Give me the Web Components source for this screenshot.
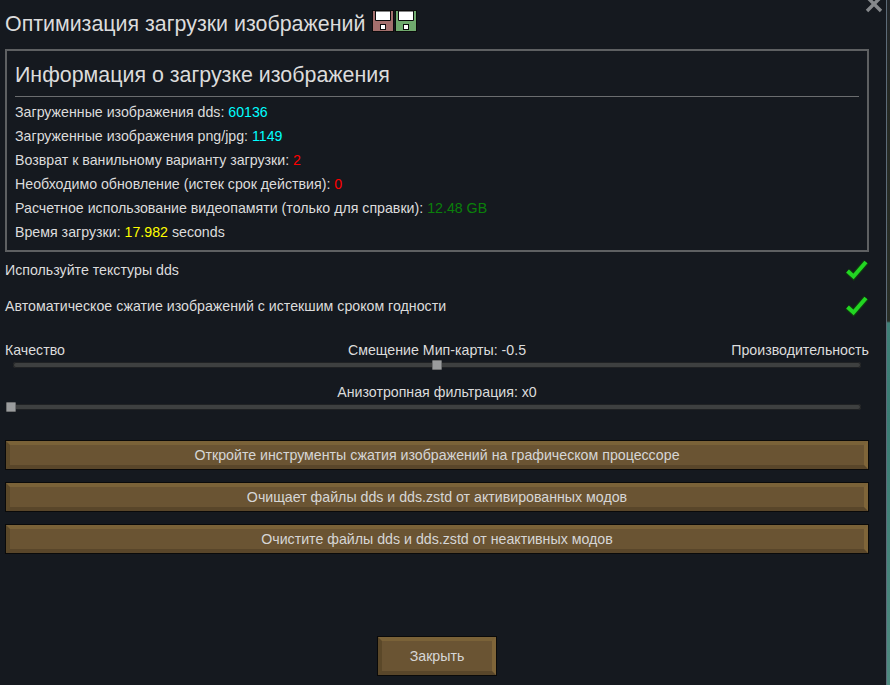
<!DOCTYPE html>
<html lang="ru">
<head>
<meta charset="utf-8">
<style>
html, body { margin: 0; height: 100%; background: #15191f; overflow: hidden; }
body { font-family: "Liberation Sans", Arial, sans-serif; font-size: 14.2px; color: #dcdcdc; }
</style>
</head>
<body>

<dialog-window>
  <title-bar>Оптимизация загрузки изображений</title-bar>
  <info-box heading="Информация о загрузке изображения">
    <info-row>Загруженные изображения dds: <span style="color:#00ffff">60136</span></info-row>
    <info-row>Загруженные изображения png/jpg: <span style="color:#00ffff">1149</span></info-row>
    <info-row>Возврат к ванильному варианту загрузки: <span style="color:#ff0000">2</span></info-row>
    <info-row>Необходимо обновление (истек срок действия): <span style="color:#ff0000">0</span></info-row>
    <info-row>Расчетное использование видеопамяти (только для справки): <span style="color:#0a800a">12.48 GB</span></info-row>
    <info-row>Время загрузки: <span style="color:#ffff00">17.982</span> seconds</info-row>
  </info-box>
  <check-row style="margin-top:1px">Используйте текстуры dds</check-row>
  <check-row>Автоматическое сжатие изображений с истекшим сроком годности</check-row>
  <mip-slider left="Качество" label="Смещение Мип-карты: -0.5" right="Производительность" value="50" inset="8" style="margin-top:16px"></mip-slider>
  <mip-slider label="Анизотропная фильтрация: x0" value="0" inset="1" style="margin-top:7px"></mip-slider>
  <wood-button wide style="margin-top:22px">Откройте инструменты сжатия изображений на графическом процессоре</wood-button>
  <wood-button wide style="margin-top:12px">Очищает файлы dds и dds.zstd от активированных модов</wood-button>
  <wood-button wide style="margin-top:12px">Очистите файлы dds и dds.zstd от неактивных модов</wood-button>
  <wood-button slot="footer">Закрыть</wood-button>
</dialog-window>

<script>
class DialogWindow extends HTMLElement {
  constructor() {
    super();
    this.shadow = this.attachShadow({ mode: 'open' });
  }
  connectedCallback() {
    this.shadow.innerHTML = `
    <style>
    :host { display: flex; width: 890px; height: 685px; position: relative; overflow: hidden; }
    .main { width: 864px; height: 685px; padding: 0 21px 0 5px; display: flex; flex-direction: column; flex: none; }
    .footer { margin-top: auto; margin-bottom: 9px; display: flex; justify-content: center; width: 864px; }
    .close { position: absolute; left: 864px; top: 0; width: 20px; height: 14px; }
    .edge { width: 1px; background: #5d6b78; position: absolute; left: 886px; top: 0; bottom: 0; }
    .outside { position: absolute; left: 887px; top: 0; bottom: 0; width: 3px;
      background: linear-gradient(#22262a 0, #262a24 100px, #2a3028 321px, #3f8077 323px, #3a7d74 420px, #4f8a80 685px); }
    </style>
    <div class="main">
      <slot></slot>
      <div class="footer"><slot name="footer"></slot></div>
    </div>
    <svg class="close" viewBox="0 0 20 14"><path d="M3 -3 L17 11 M17 -3 L3 11" stroke="#85888b" stroke-width="3.4" fill="none"/></svg>
    <div class="edge"></div>
    <div class="outside"></div>
    `;
  }
}

class TitleBar extends HTMLElement {
  constructor() {
    super();
    this.shadow = this.attachShadow({ mode: 'open' });
  }
  disk(body) {
    return `<svg width="22" height="22" viewBox="0 0 22 22">
      <rect x="0.5" y="0.5" width="21" height="21" fill="${body}" stroke="#0c0c0c"/>
      <path d="M3.5 1 V10.5 H18.5 V1 Z" fill="#fff" stroke="#0c0c0c"/>
      <rect x="8.5" y="14.5" width="5" height="5" fill="#fff" stroke="#0c0c0c"/>
    </svg>`;
  }
  connectedCallback() {
    this.shadow.innerHTML = `
    <style>
    :host { display: flex; align-items: center; height: 49px; font-size: 21.4px; color: #dcdcdc; gap: 1px; padding-bottom: 1px; box-sizing: border-box; }
    .t { margin-right: 6px; }
    svg { display: block; margin-top: -7px; }
    </style>
    <span class="t"><slot></slot></span>
    ${this.disk('#a46f6d')}${this.disk('#70aa6e')}
    `;
  }
}

class InfoBox extends HTMLElement {
  constructor() {
    super();
    this.shadow = this.attachShadow({ mode: 'open' });
  }
  connectedCallback() {
    this.shadow.innerHTML = `
    <style>
    :host { display: block; height: 203px; box-sizing: border-box; border: 2px solid #5e6062; padding: 0 8px; }
    h2 { margin: 0; height: 46px; box-sizing: border-box; padding-top: 10px; font-size: 21.4px; line-height: 28px; font-weight: normal; color: #dcdcdc; border-bottom: 1px solid #6b6d6f; }
    .rows { display: flex; flex-direction: column; padding-top: 3px; }
    </style>
    <h2>${this.getAttribute('heading')}</h2>
    <div class="rows"><slot></slot></div>
    `;
  }
}

class InfoRow extends HTMLElement {
  constructor() {
    super();
    this.shadow = this.attachShadow({ mode: 'open' });
    this.shadow.innerHTML = `
    <style>
    :host { display: block; height: 24px; line-height: 24px; white-space: nowrap; }
    </style>
    <slot></slot>
    `;
  }
}

class CheckRow extends HTMLElement {
  constructor() {
    super();
    this.shadow = this.attachShadow({ mode: 'open' });
    this.shadow.innerHTML = `
    <style>
    :host { display: flex; justify-content: space-between; height: 36px; line-height: 34px; }
    svg { margin: 5px 0 0 0; display: block; }
    </style>
    <span><slot></slot></span>
    <svg width="24" height="24" viewBox="0 0 24 24">
      <path d="M2.5 13 L8.5 18.5 L21 4" fill="none" stroke="#0f3d0f" stroke-width="6.4"/>
      <path d="M2.5 13 L8.5 18.5 L21 4" fill="none" stroke="#22d622" stroke-width="4"/>
    </svg>
    `;
  }
}

class MipSlider extends HTMLElement {
  constructor() {
    super();
    this.shadow = this.attachShadow({ mode: 'open' });
  }
  connectedCallback() {
    const inset = this.getAttribute('inset');
    const value = this.getAttribute('value');
    this.shadow.innerHTML = `
    <style>
    :host { display: block; }
    .labels { display: grid; grid-template-columns: 1fr auto 1fr; height: 18px; line-height: 18px; white-space: nowrap; }
    .r { text-align: right; }
    .track { position: relative; height: 6px; margin: 3px 8px 0 ${inset}px; border-radius: 3px; background: #3e4040; box-shadow: inset 0 0 0 1px #202224; }
    .knob { position: absolute; top: -2px; left: ${value}%; width: 10px; height: 10px; margin-left: ${value > 0 ? -5 : 0}px; box-sizing: border-box; background: #9a9c9d; border: 1px solid #6d6f70; border-radius: 1px; }
    .bottom { height: 8px; }
    </style>
    <div class="labels">
      <span>${this.getAttribute('left') || ''}</span>
      <span>${this.getAttribute('label')}</span>
      <span class="r">${this.getAttribute('right') || ''}</span>
    </div>
    <div class="track"><div class="knob"></div></div>
    <div class="bottom"></div>
    `;
  }
}

class WoodButton extends HTMLElement {
  constructor() {
    super();
    this.shadow = this.attachShadow({ mode: 'open' });
    this.shadow.innerHTML = `
    <style>
    :host { display: block; width: 120px; height: 40px; box-sizing: border-box; border: 1px solid #0a0a0a; color: #d6d6d6; position: relative; }
    :host([wide]) { width: 864px; height: 30px; }
    .b { position: absolute; inset: 0; box-sizing: border-box; border-style: solid; border-width: 4px; border-color: #7a6238 #7f6539 #59462a #5b4829; background: #6a5433; display: flex; align-items: center; justify-content: center; padding-bottom: 1px; }
    </style>
    <div class="b"><slot></slot></div>
    `;
  }
}

customElements.define('dialog-window', DialogWindow);
customElements.define('title-bar', TitleBar);
customElements.define('info-box', InfoBox);
customElements.define('info-row', InfoRow);
customElements.define('check-row', CheckRow);
customElements.define('mip-slider', MipSlider);
customElements.define('wood-button', WoodButton);
</script>
</body>
</html>
